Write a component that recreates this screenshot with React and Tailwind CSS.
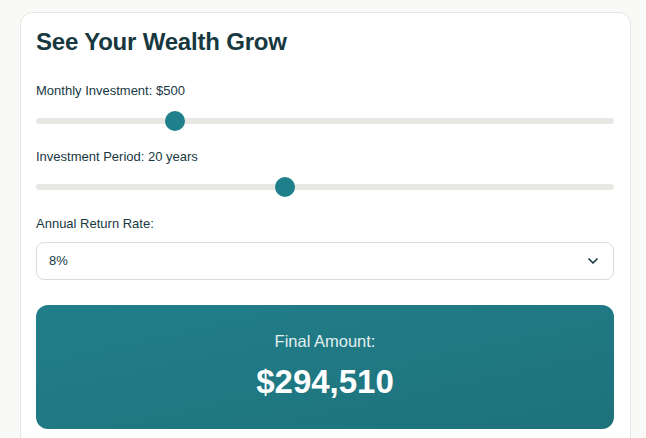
import React, { useState } from 'react';
import { ChevronDown } from 'lucide-react';

const Slider = ({ value, min, max }) => {
  const pct = (value - min) / (max - min);
  return (
    <div className="relative h-5 flex items-center">
      <div className="h-1.5 w-full rounded-full bg-[#e9e7e4]" />
      <div
        className="absolute top-0 h-5 w-5 rounded-full bg-[#1f7f8b]"
        style={{ left: `calc(${pct} * (100% - 20px))` }}
      />
    </div>
  );
};

const App = () => {
  const [monthly] = useState(500);
  const [years] = useState(20);
  const [rate] = useState(8);

  const r = rate / 100 / 12;
  const n = years * 12;
  const finalAmount = Math.round(monthly * ((Math.pow(1 + r, n) - 1) / r));

  return (
    <div className="min-h-[438px] bg-[#f9f9f7] pl-5 pr-[15px] pt-3 font-['Liberation_Sans',Arial,sans-serif] text-[#17383f]">
      <div className="rounded-xl border border-[#e6e6e2] bg-white pl-[15px] pr-4 pt-[13px] pb-6">
        <h2 className="text-[24px] font-bold leading-8 tracking-[-0.2px]">See Your Wealth Grow</h2>

        <div className="mt-[23px]">
          <label className="block text-[13px] leading-5">Monthly Investment: ${monthly}</label>
          <div className="mt-[10px]">
            <Slider value={monthly} min={50} max={2000} />
          </div>
        </div>

        <div className="mt-4">
          <label className="block text-[13px] leading-5">Investment Period: {years} years</label>
          <div className="mt-[10px]">
            <Slider value={years} min={5} max={40} />
          </div>
        </div>

        <div className="mt-[17px]">
          <label className="block text-[13px] leading-5">Annual Return Rate:</label>
          <div className="mt-2 flex h-[38px] items-center justify-between rounded-lg border border-[#dcdcd8] pl-3 pr-3">
            <span className="text-[13px]">{rate}%</span>
            <ChevronDown size={16} strokeWidth={2.5} className="text-[#17383f]" />
          </div>
        </div>

        <div className="mt-[25px] flex h-[124px] flex-col items-center rounded-xl bg-gradient-to-br from-[#217f8a] to-[#1e727c] pt-[26px] text-white">
          <div className="text-[16.5px] leading-5 text-[#e3eff0]">Final Amount:</div>
          <div className="mt-[11px] text-[33px] font-bold leading-10">${finalAmount.toLocaleString('en-US')}</div>
        </div>
      </div>
    </div>
  );
};

export default App;
